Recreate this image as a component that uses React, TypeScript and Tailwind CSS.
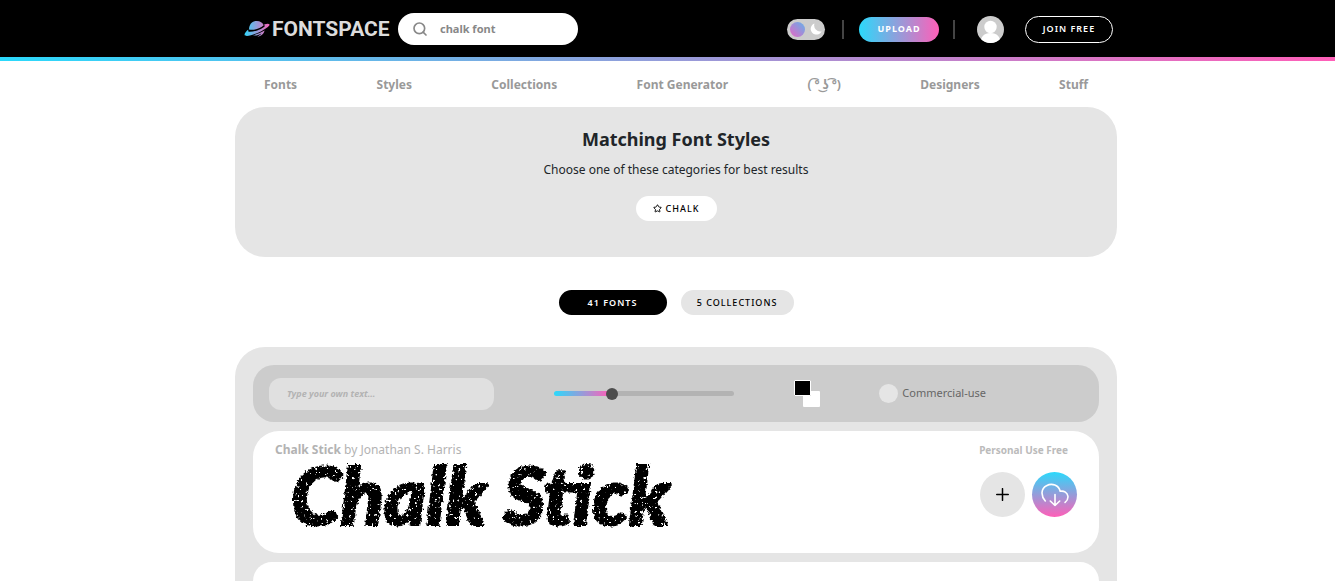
import React, { useState } from 'react';
import { Search, Star } from 'lucide-react';

const navLinks = ['Fonts', 'Styles', 'Collections', 'Font Generator', '( ͡° ͜ʖ ͡°)', 'Designers', 'Stuff'];

function PlanetLogo() {
  return (
    <svg className="h-[18px] w-[26px] shrink-0" viewBox="0 0 26 18" fill="none" aria-hidden="true">
      <defs>
        <linearGradient id="planet" x1="0" y1="0" x2="26" y2="0" gradientUnits="userSpaceOnUse">
          <stop offset="0" stopColor="#2bd9fb" />
          <stop offset="1" stopColor="#ff5fb8" />
        </linearGradient>
      </defs>
      <path d="M5 9.500C5 4.300 8.200 1 12.800 1c3.300 0 5.900 1.700 6.900 4.300C16.700 8.200 10.500 10.600 5 9.500Z" fill="url(#planet)" />
      <path d="M4.300 9.600C2 11.500.200 13.800.600 15c.900 2.100 8.400.300 15.200-3.100C21.900 8.800 26.200 5.700 25.400 4.300c-.400-.900-2.900-.700-5.300.100.400.600.600 1.200.700 1.800-2.700 2.800-10.600 6-16.200 5.500-.400-.700-.500-1.300-.300-2.100Z" fill="url(#planet)" />
      <path d="M8.500 15.300c4.500-.800 8.700-2.700 12.100-4.700-.900 3.600-3.500 6-7.400 6 1.700-.800 3.300-2 4.200-3.200-2.500 1.500-5.500 2.400-8.900 1.900Z" fill="url(#planet)" />
    </svg>
  );
}

function Header() {
  const [query, setQuery] = useState('chalk font');

  return (
    <header className="bg-black">
      <div className="pl-[17px]">
        <div className="max-w-[882px] h-[57px] mx-auto pt-px pl-[9px] pr-1 flex items-center justify-between">
          <div className="flex items-center gap-2">
            <a href="#" className="flex items-center gap-0.5 w-[146px]">
              <PlanetLogo />
              <span className="font-['Roboto',sans-serif] font-bold text-[21px] leading-6 text-[#dcdcdc]">FONTSPACE</span>
            </a>
            <label className="flex items-center gap-3 w-[180px] h-8 px-3.5 rounded-full bg-white">
              <Search className="size-4 text-[#888] shrink-0" strokeWidth={2.5} />
              <input
                aria-label="Search fonts"
                value={query}
                onChange={(e) => setQuery(e.target.value)}
                className="min-w-0 flex-1 text-[11px] font-bold text-[#888] outline-none"
              />
            </label>
          </div>
          <div className="flex items-center">
            <button type="button" aria-label="Toggle dark mode" className="w-[38px] h-[21px] px-[3px] rounded-full bg-[#ccc] flex items-center justify-between">
              <span className="size-[15px] rounded-full bg-linear-to-tr/srgb from-[#e667c4] to-[#61b1ea]" />
              <svg className="size-3" viewBox="0 0 12 12" aria-hidden="true">
                <path d="M4.500.500A5.700 5.700 0 1 0 11.600 8.200 6 6 0 0 1 4.500.500Z" fill="#fff" />
              </svg>
            </button>
            <span className="w-0.5 h-[19px] ml-[17px] mr-[15px] bg-[#444]" />
            <button type="button" className="w-20 h-[25px] rounded-full bg-linear-to-r/srgb from-[#2bd9fb] to-[#ff5fb8] text-[9px] font-bold tracking-[1px] text-white">UPLOAD</button>
            <span className="w-0.5 h-[19px] ml-[14px] mr-[22px] bg-[#444]" />
            <a href="#" aria-label="Account">
              <svg className="size-[27px] rounded-full bg-[#ccc]" viewBox="0 0 27 27" fill="#fff" aria-hidden="true">
                <circle cx="13.500" cy="11" r="6.200" />
                <path d="M3.500 27c0-6 3.500-10 10-10s10 4 10 10Z" />
              </svg>
            </a>
            <button type="button" className="w-[88px] h-[27px] ml-[21px] rounded-full border border-white text-[9px] font-semibold tracking-[1px] text-white">JOIN FREE</button>
          </div>
        </div>
      </div>
      <div className="h-1 bg-linear-to-r/srgb from-[#2bd9fb] to-[#ff5fb8]" />
    </header>
  );
}

function Toolbar() {
  const [text, setText] = useState('');
  const [size, setSize] = useState(31);

  return (
    <div className="h-[57px] pl-4 pr-[113px] rounded-[21px] bg-[#ccc] flex items-center justify-between">
      <input
        aria-label="Preview text"
        placeholder="Type your own text..."
        value={text}
        onChange={(e) => setText(e.target.value)}
        className="w-[225px] h-8 px-[18px] rounded-xl bg-[#e0e0e0] text-[9px] font-bold italic placeholder:text-[#b3b3b3] outline-none"
      />
      <input
        type="range"
        aria-label="Preview size"
        value={size}
        onChange={(e) => setSize(Number(e.target.value))}
        style={{ background: `linear-gradient(to right, #2bd9fb, #ff5fb8 ${size}%, #b3b3b3 ${size}%)` }}
        className="w-[180px] h-[5px] rounded-full appearance-none [&::-webkit-slider-thumb]:appearance-none [&::-webkit-slider-thumb]:size-3 [&::-webkit-slider-thumb]:rounded-full [&::-webkit-slider-thumb]:bg-[#4d4d4d]"
      />
      <div className="grid w-[26px] h-[27px]">
        <button type="button" aria-label="Background color" className="col-start-1 row-start-1 place-self-end w-[17px] h-4 rounded-[1px] bg-white" />
        <button type="button" aria-label="Text color" className="col-start-1 row-start-1 w-[17px] h-4 rounded-[1px] border border-white bg-black" />
      </div>
      <label className="flex items-center gap-1 text-[11px] text-[#666]">
        <input type="checkbox" className="appearance-none size-[19px] rounded-full bg-[#e5e5e5] checked:bg-[#4d4d4d]" />
        Commercial-use
      </label>
    </div>
  );
}

function FontCard() {
  return (
    <article className="h-[122px] px-[22px] pt-2 rounded-[26px] bg-white flex justify-between">
      <div>
        <p className="pt-px text-xs leading-5 text-[#b3b3b3]">
          <a href="#" className="font-bold">Chalk Stick</a> by <a href="#">Jonathan S. Harris</a>
        </p>
        {/* Rough, grainy edge for the chalk preview */}
        <svg className="block size-0" aria-hidden="true">
          <filter id="chalk" x="-5%" y="-5%" width="110%" height="110%">
            <feMorphology in="SourceGraphic" operator="dilate" radius="1" result="bold" />
            <feTurbulence type="fractalNoise" baseFrequency="0.35" numOctaves="3" seed="4" result="noise" />
            <feDisplacementMap in="bold" in2="noise" scale="5" xChannelSelector="R" yChannelSelector="G" result="rough" />
            <feColorMatrix in="noise" values="0 0 0 0 0  0 0 0 0 0  0 0 0 0 0  0 0 0 12 -3.1" result="grain" />
            <feComposite in="rough" in2="grain" operator="in" />
          </filter>
        </svg>
        <a href="#" className="block pl-4 font-['Lato',sans-serif] font-black italic text-[80px] leading-[68px] text-black whitespace-nowrap [filter:url(#chalk)]">Chalk Stick</a>
      </div>
      <div className="flex flex-col items-end">
        <p className="pr-[9px] pt-px text-[10px] leading-5 font-bold text-[#bbb]">Personal Use Free</p>
        <div className="flex gap-[7px] mt-3">
          <button type="button" aria-label="Add to collection" className="size-[45px] rounded-full bg-[#e5e5e5] flex items-center justify-center">
            <svg className="size-[13px]" viewBox="0 0 13 13" stroke="#000" strokeWidth="1.500" strokeLinecap="round" aria-hidden="true">
              <path d="M6.500.700v11.600M.700 6.500h11.600" />
            </svg>
          </button>
          <button type="button" aria-label="Download" className="size-[45px] rounded-full bg-linear-to-b/srgb from-[#2bd9fb] to-[#ff5fb8] flex items-center justify-center">
            <svg className="w-7 h-6" viewBox="0 0 28 24" fill="none" stroke="#fff" strokeWidth="1.600" strokeLinecap="round" strokeLinejoin="round" aria-hidden="true">
              <path d="M4.300 18C-.500 12.500 0 5.500 5.500 2.700 11-.200 17.700 2 19.200 8.300c4-.800 7.200 1.300 7.700 4.800.300 2.400-.700 4.700-2.800 6.300M14 11.500v11M9.300 18l4.700 4.500 4.700-4.500" />
            </svg>
          </button>
        </div>
      </div>
    </article>
  );
}

export default function App() {
  return (
    <div className="min-h-screen flex flex-col bg-white font-['Noto_Sans','Open_Sans',sans-serif] text-[#212529]">
      <Header />
      <div className="pl-[17px] flex-1 flex flex-col">
        <div className="w-full max-w-[882px] mx-auto flex-1 flex flex-col">
          <nav className="h-[46px] pt-0.5 px-[29px] flex items-center justify-between text-xs font-bold text-[#999]">
            {navLinks.map((link) => (
              <a key={link} href="#" className="whitespace-nowrap">{link}</a>
            ))}
          </nav>

          <section className="h-[150px] pt-5 rounded-[30px] bg-[#e5e5e5] flex flex-col items-center">
            <h1 className="text-lg leading-6 font-bold">Matching Font Styles</h1>
            <p className="mt-[9px] text-xs leading-5">Choose one of these categories for best results</p>
            <a href="#" className="mt-4 w-[81px] h-[25px] rounded-full bg-white flex items-center justify-center gap-1 text-[9px] font-medium tracking-[1px] text-black">
              <Star className="size-[9px]" strokeWidth={2.5} />
              CHALK
            </a>
          </section>

          {/* Result tabs */}
          <div className="pt-[33px] pb-8 flex justify-center gap-3.5 text-[9px]">
            <button type="button" className="w-[108px] h-[25px] rounded-full bg-black font-semibold text-white tracking-[1px]">41 FONTS</button>
            <button type="button" className="w-[113px] h-[25px] rounded-full bg-[#e5e5e5] font-medium text-black tracking-[1px]">5 COLLECTIONS</button>
          </div>

          <main className="flex-1 flex flex-col gap-[9px] px-[18px] pt-[18px] rounded-t-[30px] bg-[#e5e5e5]">
            <Toolbar />
            <FontCard />
            <article className="flex-1 rounded-t-[26px] bg-white" />
          </main>
        </div>
      </div>
    </div>
  );
}
